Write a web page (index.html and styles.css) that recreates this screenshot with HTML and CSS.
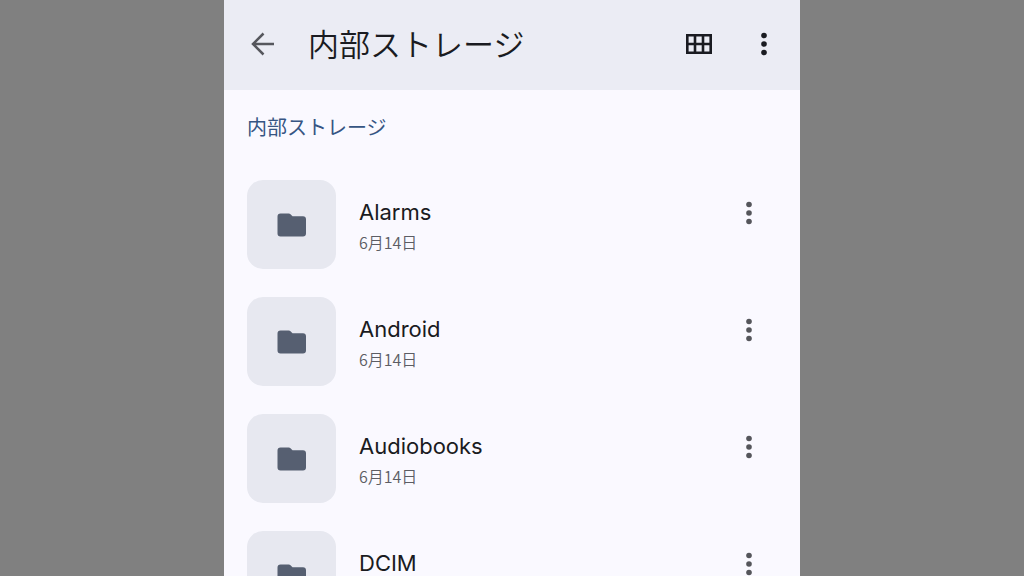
FILE: index.html
```html
<!DOCTYPE html>
<html lang="ja">
<head>
    <meta charset="UTF-8">
    <meta name="viewport" content="width=device-width, initial-scale=1">
    <title>内部ストレージ</title>
    <link rel="stylesheet" href="styles.css">
</head>
<body>
<svg class="defs" aria-hidden="true">
    <symbol id="folder" viewBox="0 0 30 24">
        <path d="M3.500 0.500h8.200c.8 0 1.300.3 1.800.8l2 2h10.500c1.900 0 3 1.100 3 3v14.200c0 1.900-1.100 3-3 3h-22.500c-1.900 0-3-1.100-3-3v-17c0-1.900 1.100-3 3-3z" fill="currentColor"/>
    </symbol>
    <symbol id="dots" viewBox="0 0 8 24">
        <circle cx="4" cy="3.500" r="2.800" fill="currentColor"/>
        <circle cx="4" cy="12" r="2.800" fill="currentColor"/>
        <circle cx="4" cy="20.500" r="2.800" fill="currentColor"/>
    </symbol>
</svg>
<div class="screen">
    <header class="bar">
        <button class="back" type="button" aria-label="戻る">
            <svg width="24" height="24" viewBox="0 0 24 24"><path d="M23 12H2M12.500 1.500L2 12l10.500 10.500" fill="none" stroke="currentColor" stroke-width="2.500"/></svg>
        </button>
        <h1>内部ストレージ</h1>
        <button class="grid" type="button" aria-label="グリッド表示">
            <svg width="26" height="20" viewBox="0 0 26 20"><path d="M1.300 1.300h23.400v17.400H1.300zM9 1v18M17 1v18M1 10h24" fill="none" stroke="currentColor" stroke-width="2.600"/></svg>
        </button>
        <button class="menu" type="button" aria-label="その他">
            <svg width="8" height="24"><use href="#dots"/></svg>
        </button>
    </header>
    <main>
        <h2><a href="#">内部ストレージ</a></h2>
        <ul class="list">
            <li>
                <div class="thumb"><svg width="30" height="24"><use href="#folder"/></svg></div>
                <div class="info">
                    <p class="name">Alarms</p>
                    <p class="date">6月14日</p>
                </div>
                <button class="more" type="button" aria-label="Alarms のメニュー"><svg width="8" height="24"><use href="#dots"/></svg></button>
            </li>
            <li>
                <div class="thumb"><svg width="30" height="24"><use href="#folder"/></svg></div>
                <div class="info">
                    <p class="name">Android</p>
                    <p class="date">6月14日</p>
                </div>
                <button class="more" type="button" aria-label="Android のメニュー"><svg width="8" height="24"><use href="#dots"/></svg></button>
            </li>
            <li>
                <div class="thumb"><svg width="30" height="24"><use href="#folder"/></svg></div>
                <div class="info">
                    <p class="name">Audiobooks</p>
                    <p class="date">6月14日</p>
                </div>
                <button class="more" type="button" aria-label="Audiobooks のメニュー"><svg width="8" height="24"><use href="#dots"/></svg></button>
            </li>
            <li>
                <div class="thumb"><svg width="30" height="24"><use href="#folder"/></svg></div>
                <div class="info">
                    <p class="name">DCIM</p>
                    <p class="date">6月14日</p>
                </div>
                <button class="more" type="button" aria-label="DCIM のメニュー"><svg width="8" height="24"><use href="#dots"/></svg></button>
            </li>
        </ul>
    </main>
</div>
</body>
</html>
```
FILE: styles.css
```css
*{
    margin: 0;
    padding: 0;
    box-sizing: border-box;
}
body{
    background: #808080;
    font-family: "Noto Sans CJK JP", sans-serif;
    color: #1a1b21;
}
ul{
    list-style: none;
}
a{
    color: inherit;
    text-decoration: none;
}
button{
    display: flex;
    align-items: center;
    justify-content: center;
    flex: none;
    border: 0;
    background: none;
    color: inherit;
    cursor: pointer;
}
svg{
    display: block;
}
.defs{
    display: none;
}
.screen{
    max-width: 576px;
    min-height: 100vh;
    margin: 0 auto;
    background: #faf9ff;
}

/* top bar */
.bar{
    display: flex;
    align-items: center;
    height: 90px;
    padding: 0 16px 2px;
    background: #ebecf4;
}
.bar h1{
    flex: 1;
    margin-left: 22px;
    padding-bottom: 2px;
    font-size: 31px;
    font-weight: 350;
    line-height: 40px;
}
.back,.grid,.menu,.more{
    width: 46px;
    height: 46px;
}
.back{
    color: #56575d;
}
.menu{
    width: 40px;
    margin-left: 22px;
}

/* files */
main{
    padding: 23px 22px 23px 23px;
}
h2{
    color: #365583;
    font-size: 20px;
    font-weight: 400;
    line-height: 28px;
}
.list{
    display: grid;
    gap: 28px;
    margin-top: 39px;
}
.list li{
    display: flex;
    align-items: center;
}
.thumb{
    display: flex;
    align-items: center;
    justify-content: center;
    flex: none;
    width: 89px;
    height: 89px;
    border-radius: 16px;
    background: #e7e8f0;
    color: #565f71;
}
.info{
    flex: 1;
    padding: 2px 0 0 23px;
}
.name{
    font-family: Inter, sans-serif;
    font-size: 22px;
    line-height: 32px;
}
.date{
    color: #5c5d64;
    font-size: 16px;
    font-weight: 350;
    line-height: 28px;
}
.more{
    align-self: flex-start;
    margin: 10px 6px 0 0;
    color: #55565b;
}
```
